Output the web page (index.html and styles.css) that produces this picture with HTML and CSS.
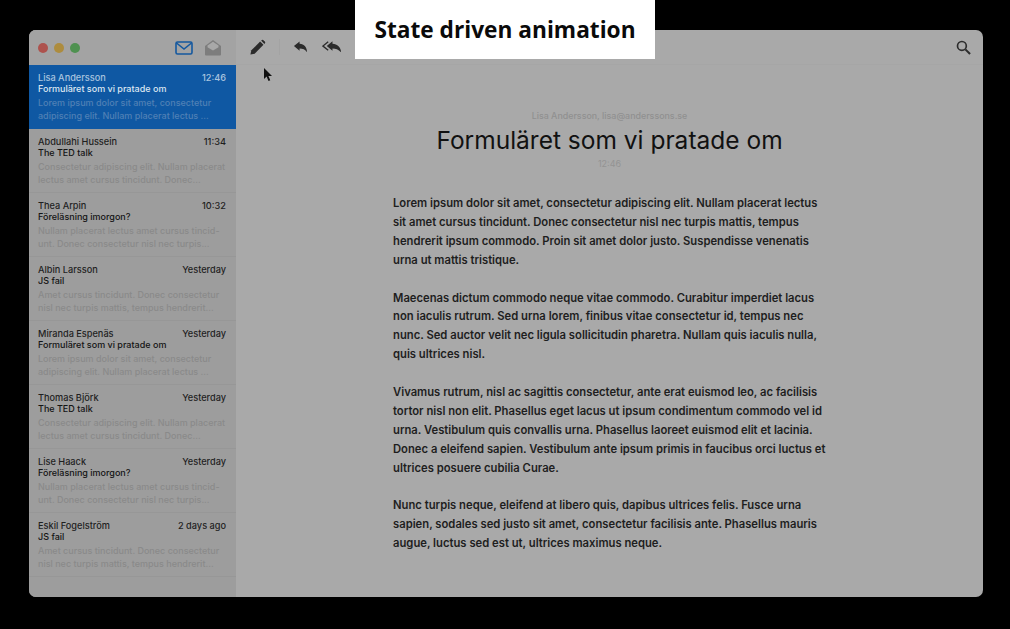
FILE: index.html
```html
<!DOCTYPE html>
<html lang="sv">

<head>
  <meta charset="UTF-8">
  <meta name="viewport" content="width=device-width, initial-scale=1.0">
  <title>State driven animation</title>
  <link rel="stylesheet" href="styles.css">
</head>

<body>
  <div class="caption">State driven animation</div>

  <div class="window">
    <aside class="sidebar">
      <div class="side-top">
        <span class="dot red"></span>
        <span class="dot yellow"></span>
        <span class="dot green"></span>
        <svg class="mail-icon" width="18" height="14" viewBox="0 0 18 14">
          <rect x="1" y="1" width="16" height="12" rx="1.5" fill="none" stroke="#14589f" stroke-width="1.6"/>
          <path d="M1.500 2l7.500 6 7.500-6" fill="none" stroke="#14589f" stroke-width="1.6"/>
        </svg>
        <svg class="open-icon" width="18" height="17" viewBox="0 0 18 17">
          <path d="M1 7L9 1l8 6v8.500a1 1 0 0 1-1 1H2a1 1 0 0 1-1-1z" fill="#7d7d7d"/>
          <path d="M3.500 6.500L9 2.800l5.500 3.700v1.800L9 11.500 3.500 8.300z" fill="#a8a8a8"/>
        </svg>
      </div>

      <div class="mail active">
        <div class="mail-head"><span>Lisa Andersson</span><span>12:46</span></div>
        <div class="mail-subject">Formuläret som vi pratade om</div>
        <div class="mail-text">Lorem ipsum dolor sit amet, consectetur<br>adipiscing elit. Nullam placerat lectus ...</div>
      </div>
      <div class="mail">
        <div class="mail-head"><span>Abdullahi Hussein</span><span>11:34</span></div>
        <div class="mail-subject">The TED talk</div>
        <div class="mail-text">Consectetur adipiscing elit. Nullam placerat<br>lectus amet cursus tincidunt. Donec...</div>
      </div>
      <div class="mail">
        <div class="mail-head"><span>Thea Arpin</span><span>10:32</span></div>
        <div class="mail-subject">Föreläsning imorgon?</div>
        <div class="mail-text">Nullam placerat lectus amet cursus tincid-<br>unt. Donec consectetur nisl nec turpis...</div>
      </div>
      <div class="mail">
        <div class="mail-head"><span>Albin Larsson</span><span>Yesterday</span></div>
        <div class="mail-subject">JS fail</div>
        <div class="mail-text">Amet cursus tincidunt. Donec consectetur<br>nisl nec turpis mattis, tempus hendrerit...</div>
      </div>
      <div class="mail">
        <div class="mail-head"><span>Miranda Espenäs</span><span>Yesterday</span></div>
        <div class="mail-subject">Formuläret som vi pratade om</div>
        <div class="mail-text">Lorem ipsum dolor sit amet, consectetur<br>adipiscing elit. Nullam placerat lectus ...</div>
      </div>
      <div class="mail">
        <div class="mail-head"><span>Thomas Björk</span><span>Yesterday</span></div>
        <div class="mail-subject">The TED talk</div>
        <div class="mail-text">Consectetur adipiscing elit. Nullam placerat<br>lectus amet cursus tincidunt. Donec...</div>
      </div>
      <div class="mail">
        <div class="mail-head"><span>Lise Haack</span><span>Yesterday</span></div>
        <div class="mail-subject">Föreläsning imorgon?</div>
        <div class="mail-text">Nullam placerat lectus amet cursus tincid-<br>unt. Donec consectetur nisl nec turpis...</div>
      </div>
      <div class="mail">
        <div class="mail-head"><span>Eskil Fogelström</span><span>2 days ago</span></div>
        <div class="mail-subject">JS fail</div>
        <div class="mail-text">Amet cursus tincidunt. Donec consectetur<br>nisl nec turpis mattis, tempus hendrerit...</div>
      </div>
    </aside>

    <main class="reader">
      <div class="toolbar">
        <svg class="tool" width="17" height="17" viewBox="0 0 18 18">
          <path d="M1.500 16.500l1-4.500L11.800 2.700l3.500 3.500L6 15.500z" fill="#2b2b2b"/>
          <path d="M12.800 1.700l1-.7a1 1 0 0 1 1.200 0l2 2a1 1 0 0 1 0 1.200l-.7 1z" fill="#2b2b2b"/>
        </svg>
        <span class="tool-sep"></span>
        <svg class="tool" width="15" height="14" viewBox="0 0 16 14">
          <path d="M7 1L1 6l6 5V8.500c3.500 0 6 1 8 4C15 7.500 12 3.500 7 3.500z" fill="#2b2b2b"/>
        </svg>
        <svg class="tool" width="20" height="14" viewBox="0 0 21 14">
          <path d="M6.500 1.500L1 6l5.500 4.500" fill="none" stroke="#2b2b2b" stroke-width="1.400"/>
          <path d="M11 1L5 6l6 5V8.500c3.500 0 6 1 9 4C20 7.500 16 3.500 11 3.500z" fill="#2b2b2b"/>
        </svg>
        <svg class="tool" width="15" height="14" viewBox="0 0 16 14">
          <path d="M9 1l6 5-6 5V8.500c-3.500 0-6 1-8 4C1 7.500 4 3.500 9 3.500z" fill="#2b2b2b"/>
        </svg>
        <span class="toolbar-fill"></span>
        <svg class="search" width="15" height="15" viewBox="0 0 16 16">
          <circle cx="6.300" cy="6.300" r="4.700" fill="none" stroke="#2d2d2d" stroke-width="1.800"/>
          <path d="M10 10l5 5" stroke="#2d2d2d" stroke-width="2.200"/>
        </svg>
      </div>

      <article class="message">
        <div class="sender">Lisa Andersson, lisa@anderssons.se</div>
        <h1>Formuläret som vi pratade om</h1>
        <div class="sent">12:46</div>
        <div class="body-text">
          <p>Lorem ipsum dolor sit amet, consectetur adipiscing elit. Nullam placerat lectus<br>sit amet cursus tincidunt. Donec consectetur nisl nec turpis mattis, tempus<br>hendrerit ipsum commodo. Proin sit amet dolor justo. Suspendisse venenatis<br>urna ut mattis tristique.</p>
          <p>Maecenas dictum commodo neque vitae commodo. Curabitur imperdiet lacus<br>non iaculis rutrum. Sed urna lorem, finibus vitae consectetur id, tempus nec<br>nunc. Sed auctor velit nec ligula sollicitudin pharetra. Nullam quis iaculis nulla,<br>quis ultrices nisl.</p>
          <p>Vivamus rutrum, nisl ac sagittis consectetur, ante erat euismod leo, ac facilisis<br>tortor nisl non elit. Phasellus eget lacus ut ipsum condimentum commodo vel id<br>urna. Vestibulum quis convallis urna. Phasellus laoreet euismod elit et lacinia.<br>Donec a eleifend sapien. Vestibulum ante ipsum primis in faucibus orci luctus et<br>ultrices posuere cubilia Curae.</p>
          <p>Nunc turpis neque, eleifend at libero quis, dapibus ultrices felis. Fusce urna<br>sapien, sodales sed justo sit amet, consectetur facilisis ante. Phasellus mauris<br>augue, luctus sed est ut, ultrices maximus neque.</p>
        </div>
      </article>

      <svg class="pointer" width="10" height="14" viewBox="0 0 10 14">
        <path d="M1 0v11l2.600-2.400L5.500 13l1.800-.8-1.900-4.300H9z" fill="#111"/>
      </svg>
    </main>
  </div>
</body>

</html>
```

FILE: styles.css
```css
* {
  box-sizing: border-box;
}

html,
body {
  height: 100%;
}

body {
  margin: 0;
  padding: 30px 27px 32px 29px;
  overflow: hidden;
  background-color: #000;
  color: #111;
  font-family: Inter, 'Noto Sans', sans-serif;
}

.caption {
  position: absolute;
  z-index: 1;
  top: 0;
  left: 355px;
  width: 300px;
  height: 59px;
  background-color: #fff;
  color: #0a0a0a;
  font-family: 'Open Sans', 'Noto Sans', sans-serif;
  font-size: 22.700px;
  font-weight: 700;
  line-height: 59px;
  text-align: center;
}

.window {
  display: flex;
  height: 567px;
  border-radius: 7px;
  overflow: hidden;
  background-color: #a9a9a9;
}

/* sidebar */
.sidebar {
  flex: 0 0 207px;
  padding-bottom: 20px;
  background-color: #9d9d9d;
}

.side-top {
  display: flex;
  align-items: center;
  height: 35px;
  padding-left: 9px;
  background-color: #a3a3a3;
}

.dot {
  width: 10px;
  height: 10px;
  margin-right: 6px;
  border-radius: 50%;
}

.red {
  background-color: #ad524d;
}

.yellow {
  background-color: #ad8c3e;
}

.green {
  background-color: #4f9150;
}

.mail-icon {
  margin-left: 89px;
}

.open-icon {
  margin-left: 11px;
}

.mail {
  height: 64px;
  padding: 7px 10px 0 9px;
  border-bottom: 1px solid #979797;
  font-size: 9px;
  line-height: 12.500px;
  font-weight: 500;
}

.mail-head {
  display: flex;
  justify-content: space-between;
  color: #1f1f1f;
  font-size: 9.200px;
}

.mail-subject {
  margin: -1.500px 0 1.500px;
  color: #141414;
}

.mail-text {
  color: #8a8a8a;
  white-space: nowrap;
}

.mail.active {
  border-bottom: 0;
  background-color: #0f58a3;
}

.active .mail-head {
  color: #a9c4df;
}

.active .mail-subject {
  color: #dce7f2;
}

.active .mail-text {
  color: #5080b5;
}

/* message pane */
.reader {
  position: relative;
  flex: 1;
}

.toolbar {
  display: flex;
  align-items: center;
  height: 35px;
  padding: 0 12px 0 13px;
  border-bottom: 1px solid #a6a6a6;
}

.tool {
  flex: none;
}

.tool-sep {
  width: 1px;
  height: 16px;
  margin: 0 13px 0 13px;
  background-color: #a3a3a3;
}

.tool + .tool {
  margin-left: 14px;
}

.toolbar-fill {
  flex: 1;
}

.message {
  padding-top: 45px;
  text-align: center;
}

.sender {
  color: #909090;
  font-size: 8.900px;
  line-height: 12px;
  font-weight: 500;
}

h1 {
  margin: 3px 0 2px;
  color: #111;
  font-size: 24.500px;
  line-height: 31px;
  font-weight: 400;
}

.sent {
  color: #939393;
  font-size: 9px;
  line-height: 12px;
}

.body-text {
  width: 440px;
  margin: 24px 0 0 157px;
  color: #1e1e1e;
  font-size: 11.250px;
  line-height: 18.900px;
  font-weight: 600;
  text-align: left;
  white-space: nowrap;
}

p {
  margin: 0 0 18.900px;
}

.pointer {
  position: absolute;
  top: 38px;
  left: 27px;
}
```
